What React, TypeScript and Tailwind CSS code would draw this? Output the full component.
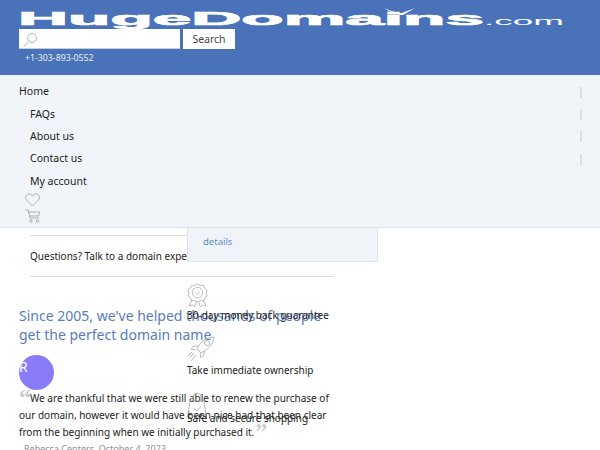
import React from "react";

const F = { fontFamily: '"Noto Sans", sans-serif' };

function Logo() {
  return (
    <svg width="550" height="23" viewBox="0 0 550 23" className="block">
      <text x="0" y="19" fill="#fff" fontFamily="Liberation Sans" fontWeight="700" fontSize="18" textLength="466" lengthAdjust="spacingAndGlyphs" stroke="#fff" strokeWidth="0.7">HugeDomains</text>
      <text x="466" y="19" fill="#fff" fontFamily="Liberation Sans" fontSize="11" textLength="80" lengthAdjust="spacingAndGlyphs">.com</text>
      <path d="M366 2 C375 6 380 7 384 7 L397 2 L385 9 L383 9 C378 8 372 6 366 2Z" fill="#fff" />
    </svg>
  );
}

function NavRow({ label, sub, mark }: { label: string; sub?: boolean; mark?: boolean }) {
  return (
    <div className={`flex h-[22.33px] items-center justify-between pr-[18px] text-[10.500px] text-[#222] ${sub ? "pl-[30px]" : "pl-[19px]"}`}>
      <span>{label}</span>
      {mark && <span className="h-[11px] w-[2px] bg-[#dcdfe3]" />}
    </div>
  );
}

function Medal() {
  return (
    <svg width="21" height="25" viewBox="0 0 22 26" fill="none" stroke="#a3a8ad" strokeWidth="0.8" className="block">
      <path d="M11 1l3 1.600 3.400-.2 1 3 2.600 2-1 3.100 1 3-2.600 2-1 3-3.400-.1-3 1.600-3-1.600-3.400.1-1-3-2.600-2 1-3-1-3.100 2.600-2 1-3 3.400.2z" />
      <circle cx="11" cy="10" r="5.500" />
      <path d="M8.500 10l2 2 3.500-3.500M5 18l-3 6 4-1 2 2 2-6M17 18l3 6-4-1-2 2-2-6" />
    </svg>
  );
}

function Rocket() {
  return (
    <svg width="28" height="26" viewBox="0 0 28 26" fill="none" stroke="#a3a8ad" strokeWidth="0.8" className="block">
      <path d="M27 1c-6 0-11 3-14 7l-3 5 4 4 5-3c4-3 8-8 8-13z" />
      <circle cx="20" cy="7" r="2.500" />
      <path d="M11 10H7l-3 3 5 1M17 15v4l-3 3-1-5M7 17l-4 4M9 19l-5 6M5 16l-4 4" />
    </svg>
  );
}

function Bag() {
  return (
    <svg width="20" height="26" viewBox="0 0 20 26" fill="none" stroke="#a3a8ad" strokeWidth="0.8" className="block">
      <path d="M3 9h14l2 14H1zM6 9V5a4 4 0 0 1 8 0v4M7 16l3 3 4-5" />
    </svg>
  );
}

export default function App() {
  return (
    <div style={F} className="relative h-[450px] w-[600px] overflow-hidden bg-white">
      <header className="relative z-20 h-[75px] bg-[#4a72b8] pl-[18px] pt-[6px]">
        <Logo />
        <div className="flex gap-[3px] pl-[1px]">
          <div className="relative h-[20px] w-[161px] border-b border-b-[#c5cfdf] bg-white">
            <svg width="16" height="16" viewBox="0 0 16 16" fill="none" stroke="#b5b5b5" strokeWidth="1" className="absolute left-[3px] top-[3px]">
              <circle cx="10" cy="6" r="4.500" />
              <path d="M6.500 9.500L1.500 15" />
            </svg>
          </div>
          <button className="h-[20px] w-[52px] bg-white text-[10.500px] leading-[20px] text-[#444]">Search</button>
        </div>
        <div className="pl-[7px] pt-[3px] text-[8.750px] leading-[13px] text-[#e8edf6]">+1-303-893-0552</div>
      </header>

      <nav className="relative z-20 h-[153px] border-b border-[#dfe2e6] bg-[#f1f5f9] pt-[6px]">
        <NavRow label="Home" mark />
        <NavRow label="FAQs" sub mark />
        <NavRow label="About us" sub mark />
        <NavRow label="Contact us" sub mark />
        <NavRow label="My account" sub />
        <div className="pl-[25px]">
          <svg width="15" height="14" viewBox="0 0 15 14" fill="none" stroke="#9a9fa5" strokeWidth="0.8" className="block">
            <path d="M7.500 13L1.500 7C-.5 4.500 1 1 4 1c1.500 0 2.800.8 3.500 2C8.200 1.800 9.500 1 11 1c3 0 4.500 3.500 2.500 6z" />
          </svg>
          <svg width="16" height="14" viewBox="0 0 16 14" fill="none" stroke="#9a9fa5" strokeWidth="0.8" className="mt-[2px] block">
            <path d="M.5 1h2.500l2 8h9M3.500 3H15l-1.500 4H4.500" />
            <circle cx="6" cy="12" r="1.300" />
            <circle cx="12.500" cy="12" r="1.300" />
          </svg>
        </div>
      </nav>

      <main className="relative pt-[7px] text-[10px] text-[#222]">
        <div className="ml-[30px] w-[304px] border-y border-[#dcdcdc] py-[12px] leading-[16px]">
          <div className="whitespace-nowrap">Questions? Talk to a domain expert</div>
        </div>

        <h2 className="ml-[19px] mt-[29px] w-[310px] text-[14px] leading-[19px] text-[#5a7cb8]">
          Since 2005, we've helped thousands of people get the perfect domain name
        </h2>

        <div className="ml-[19px] mt-[11px] flex h-[35px] w-[35px] items-start rounded-full bg-[#8a7bf8] pt-[2px] text-[14px] leading-[20px] text-white">R</div>

        <div className="ml-[19px] w-[320px] text-[10px] leading-[17px]">
          <span className="inline-block w-[11px] align-top font-['Liberation_Serif'] text-[24px] font-bold leading-[14px] text-[#c9ccd0]">“</span>
          We are thankful that we were still able to renew the purchase of our domain, however it would have been nice had that been clear from the beginning when we initially purchased it.
          <span className="ml-[1px] align-top font-['Liberation_Serif'] text-[24px] font-bold leading-[14px] text-[#c9ccd0]">”</span>
        </div>
        <div className="ml-[24px] mt-[1px] text-[9px] leading-[13px] text-[#8a8f94]">Rebecca Centers, October 4, 2023</div>

        {/* Overlapping panel that slides under the nav */}
        <aside className="absolute left-[187px] top-[-14px] h-[48px] w-[191px] border border-[#dfe5ec] bg-[#f0f4f8] pl-[15px] text-[9.500px]">
          <div className="leading-[15px]">Easy,</div>
          <div className="mt-[5px] leading-[13px] text-[#5f8fc8]">details</div>
        </aside>

        <div className="absolute left-[187px] top-[55px] w-[160px]">
          <Medal />
          <div className="mt-[-1px] whitespace-nowrap leading-[16px]">30-day money back guarantee</div>
          <div className="mt-[13px]"><Rocket /></div>
          <div className="whitespace-nowrap leading-[16px]">Take immediate ownership</div>
          <div className="mt-[14px]"><Bag /></div>
          <div className="mt-[-8px] whitespace-nowrap leading-[16px]">Safe and secure shopping</div>
        </div>
      </main>
    </div>
  );
}
